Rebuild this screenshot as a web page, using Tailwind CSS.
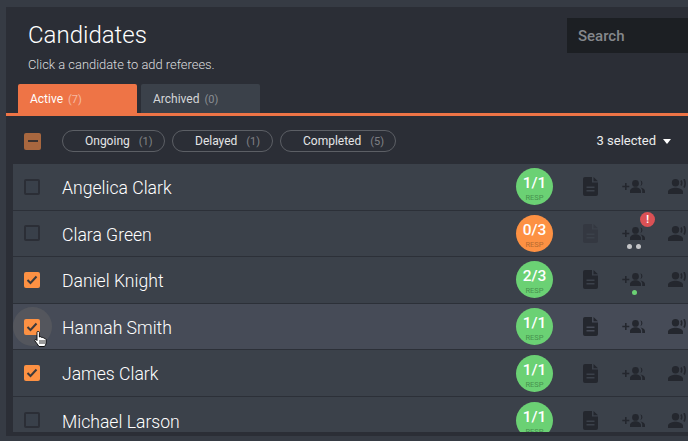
<!DOCTYPE html>
<html lang="en">

<head>
    <meta charset="UTF-8" />
    <title>Candidates</title>
    <script src="https://cdn.jsdelivr.net/npm/@tailwindcss/browser@4"></script>
</head>

<body class="w-[688px] h-[441px] overflow-hidden bg-[#363b44] font-['Roboto',sans-serif]">
    <svg class="hidden">
        <symbol id="doc" viewBox="0 0 15 19"><path fill-rule="evenodd" d="M2 0h7v5.500h6V17a2 2 0 0 1-2 2H2a2 2 0 0 1-2-2V2a2 2 0 0 1 2-2Zm8.500 0L15 4.200h-4.500ZM3.500 9.500V11h8V9.500Zm0 3.500v1.500h8V13Z" fill="currentColor"/></symbol>
        <symbol id="add" viewBox="0 0 23 13"><path d="M3 3h1.600v2.700h2.700v1.600H4.600V10H3V7.300H.3V5.700H3Z M13.500 0a3.400 3.400 0 1 1 0 6.800a3.400 3.400 0 0 1 0-6.800Z M18.300.3a3.100 3.100 0 0 1 0 5.900a5.400 5.400 0 0 0 0-5.900Z M8 13v-2c0-2.500 3.500-3.800 5.500-3.800s5.500 1.300 5.500 3.800v2Z M18.500 7.500c2.300.5 4.500 1.500 4.500 3.500v2h-2.800v-2.200c0-1.300-.6-2.400-1.700-3.300Z" fill="currentColor"/></symbol>
        <symbol id="voice" viewBox="0 0 22 15"><path d="M7.500 0a3.700 3.700 0 1 1 0 7.400a3.700 3.700 0 0 1 0-7.400Z M0 15v-2.500c0-2.500 5-3.800 7.500-3.800s7.500 1.300 7.500 3.800V15Z" fill="currentColor"/><path d="M13 1.500a5 5 0 0 1 0 5M16 0a9 9 0 0 1 0 8.500" fill="none" stroke="currentColor" stroke-width="1.600"/></symbol>
    </svg>

    <div class="ml-[6px] mt-[7px] h-[429px] bg-[#2b2e36] overflow-hidden">
        <div class="flex justify-between h-[100px]">
            <div class="pl-[22px] pt-[13px]">
                <h1 class="text-[24px] leading-[30px] font-light text-white">Candidates</h1>
                <p class="mt-[7px] text-[12.900px] leading-[16px] font-light text-[#dcdddf]">Click a candidate to add referees.</p>
            </div>
            <div class="mt-[11px] w-[121px] h-[35px] bg-[#1c1f23] pl-[11px] pt-[1px] text-[15px] leading-[35px] font-medium text-[#85888c]">Search</div>
        </div>
        <div class="flex gap-[4px] pl-[12px] h-[29px] mt-[-23px]">
            <div class="w-[119px] h-[29px] bg-[#ee7446] rounded-t-[2px] pl-[12px] pt-[1px] text-[12px] leading-[29px] text-white">Active <span class="ml-[2px] text-[11px] text-white/50">(7)</span></div>
            <div class="w-[119px] h-[29px] bg-[#3b414a] rounded-t-[2px] pl-[12px] pt-[1px] text-[12px] leading-[29px] text-[#d5d6d8]">Archived <span class="ml-[2px] text-[11px] text-white/40">(0)</span></div>
        </div>
        <div class="h-[3px] bg-[#ee7446]"></div>

        <div class="flex items-center h-[48px] pt-[2px] pl-[18px]">
            <div class="flex items-center justify-center size-[17px] rounded-[2px] bg-[#a8673f]"><div class="w-[10px] h-[2px] bg-[#3a3230]"></div></div>
            <div class="flex gap-[7px] ml-[21px]">
                <div class="w-[103px] h-[22px] pl-[22px] rounded-full border border-[#5c5f65] text-[12px] leading-[20px] text-[#e4e5e6]">Ongoing <span class="ml-[6px] text-[11px] text-white/40">(1)</span></div>
                <div class="w-[101px] h-[22px] pl-[22px] rounded-full border border-[#5c5f65] text-[12px] leading-[20px] text-[#e4e5e6]">Delayed <span class="ml-[6px] text-[11px] text-white/40">(1)</span></div>
                <div class="w-[116px] h-[22px] pl-[22px] rounded-full border border-[#5c5f65] text-[12px] leading-[20px] text-[#e4e5e6]">Completed <span class="ml-[6px] text-[11px] text-white/40">(5)</span></div>
            </div>
            <div class="ml-auto mr-[17px] flex items-center gap-[7px] text-[13px] text-[#eceded]">3 selected <span class="w-0 h-0 border-x-[4.500px] border-x-transparent border-t-[5px] border-t-white"></span></div>
        </div>

        <div class="ml-[7px] h-[268px] overflow-hidden">
            <!-- Angelica Clark -->
            <div class="flex items-center h-[46.600px] bg-[#3b414a] border-b border-[#2c3038]">
                <div class="shrink-0 ml-[11px] size-[16px] rounded-[2px] bg-[#39404a] border-2 border-[#2b2e36]"></div>
                <div class="shrink-0 ml-[22px] mt-[3px] w-[454px] text-[17.600px] font-light text-white">Angelica Clark</div>
                <div class="shrink-0 flex flex-col items-center justify-center size-[37px] pt-[5px] rounded-full bg-[#6bd174] text-white"><span class="text-[15.500px] leading-[14px] font-medium">1/1</span><span class="mt-[3px] text-[7.500px] leading-[9px] text-[#47914f]">RESP</span></div>
                <svg class="shrink-0 ml-[30px] w-[15px] h-[19px] text-[#24272e]"><use href="#doc"/></svg>
                <svg class="shrink-0 ml-[24px] w-[23px] h-[13px] text-[#24272e]"><use href="#add"/></svg>
                <svg class="shrink-0 ml-[23px] w-[22px] h-[15px] text-[#24272e]"><use href="#voice"/></svg>
            </div>
            <!-- Clara Green -->
            <div class="flex items-center h-[46.600px] bg-[#3b414a] border-b border-[#2c3038]">
                <div class="shrink-0 ml-[11px] size-[16px] rounded-[2px] bg-[#39404a] border-2 border-[#2b2e36]"></div>
                <div class="shrink-0 ml-[22px] mt-[3px] w-[454px] text-[17.600px] font-light text-white">Clara Green</div>
                <div class="shrink-0 flex flex-col items-center justify-center size-[37px] pt-[5px] rounded-full bg-[#fd9143] text-white"><span class="text-[15.500px] leading-[14px] font-medium">0/3</span><span class="mt-[3px] text-[7.500px] leading-[9px] text-[#b56a30]">RESP</span></div>
                <svg class="shrink-0 ml-[30px] w-[15px] h-[19px] text-[#343841]"><use href="#doc"/></svg>
                <div class="shrink-0 relative ml-[24px] w-[23px] h-[13px]">
                    <svg class="w-[23px] h-[13px] text-[#24272e]"><use href="#add"/></svg>
                    <div class="absolute left-[18px] top-[-15px] flex items-center justify-center size-[15px] rounded-full bg-[#da5155] text-[10px] font-bold text-white">!</div>
                    <div class="absolute left-[5px] top-[17px] flex gap-[4px]"><span class="size-[5px] rounded-full bg-[#c4c5c8]"></span><span class="size-[5px] rounded-full bg-[#c4c5c8]"></span></div>
                </div>
                <svg class="shrink-0 ml-[23px] w-[22px] h-[15px] text-[#24272e]"><use href="#voice"/></svg>
            </div>
            <!-- Daniel Knight -->
            <div class="flex items-center h-[46.600px] bg-[#3b414a] border-b border-[#2c3038]">
                <div class="shrink-0 ml-[11px] flex items-center justify-center size-[16px] rounded-[2px] bg-[#fd9143]"><svg class="w-[12px] h-[10px]" viewBox="0 0 12 10"><path d="M1.500 5l3 3l6-6.500" fill="none" stroke="#3b3a3c" stroke-width="2"/></svg></div>
                <div class="shrink-0 ml-[22px] mt-[3px] w-[454px] text-[17.600px] font-light text-white">Daniel Knight</div>
                <div class="shrink-0 flex flex-col items-center justify-center size-[37px] pt-[5px] rounded-full bg-[#6bd174] text-white"><span class="text-[15.500px] leading-[14px] font-medium">2/3</span><span class="mt-[3px] text-[7.500px] leading-[9px] text-[#47914f]">RESP</span></div>
                <svg class="shrink-0 ml-[30px] w-[15px] h-[19px] text-[#24272e]"><use href="#doc"/></svg>
                <div class="shrink-0 relative ml-[24px] w-[23px] h-[13px]">
                    <svg class="w-[23px] h-[13px] text-[#24272e]"><use href="#add"/></svg>
                    <div class="absolute left-[10px] top-[17px] size-[5px] rounded-full bg-[#6bd174]"></div>
                </div>
                <svg class="shrink-0 ml-[23px] w-[22px] h-[15px] text-[#24272e]"><use href="#voice"/></svg>
            </div>
            <!-- Hannah Smith, hovered -->
            <div class="relative flex items-center h-[46.600px] bg-[#464b57] border-b border-[#2c3038]">
                <div class="absolute left-0 top-[3.500px] size-[39px] rounded-full bg-[#5a5b5f]/70"></div>
                <div class="shrink-0 relative ml-[11px] flex items-center justify-center size-[16px] rounded-[2px] bg-[#fd9143]"><svg class="w-[12px] h-[10px]" viewBox="0 0 12 10"><path d="M1.500 5l3 3l6-6.500" fill="none" stroke="#3b3a3c" stroke-width="2"/></svg></div>
                <div class="shrink-0 relative ml-[22px] mt-[3px] w-[454px] text-[17.600px] font-light text-white">Hannah Smith</div>
                <div class="shrink-0 flex flex-col items-center justify-center size-[37px] pt-[5px] rounded-full bg-[#6bd174] text-white"><span class="text-[15.500px] leading-[14px] font-medium">1/1</span><span class="mt-[3px] text-[7.500px] leading-[9px] text-[#47914f]">RESP</span></div>
                <svg class="shrink-0 ml-[30px] w-[15px] h-[19px] text-[#24272e]"><use href="#doc"/></svg>
                <svg class="shrink-0 ml-[24px] w-[23px] h-[13px] text-[#24272e]"><use href="#add"/></svg>
                <svg class="shrink-0 ml-[23px] w-[22px] h-[15px] text-[#24272e]"><use href="#voice"/></svg>
                <!-- hand cursor -->
                <svg class="absolute left-[21px] top-[27px] w-[14px] h-[17px]" viewBox="0 0 14 17"><path d="M3 1.500a1.200 1.200 0 0 1 2.400 0V6l1-.3c.6 0 1 .3 1.100.7c.6-.3 1.300 0 1.500.5c.7-.3 1.500.1 1.600.7c.8-.2 1.400.3 1.400 1V12c0 1.500-.8 2.500-1.500 3.500H5C4 14 2.500 12 1 10c-.6-.9.300-2 1.300-1.300L3 9.500Z" fill="#fff" stroke="#000" stroke-width=".9"/><path d="M6 9v4M8 9v4M10 9v4" stroke="#000" stroke-width=".8"/></svg>
            </div>
            <!-- James Clark -->
            <div class="flex items-center h-[46.600px] bg-[#3b414a] border-b border-[#2c3038]">
                <div class="shrink-0 ml-[11px] flex items-center justify-center size-[16px] rounded-[2px] bg-[#fd9143]"><svg class="w-[12px] h-[10px]" viewBox="0 0 12 10"><path d="M1.500 5l3 3l6-6.500" fill="none" stroke="#3b3a3c" stroke-width="2"/></svg></div>
                <div class="shrink-0 ml-[22px] mt-[3px] w-[454px] text-[17.600px] font-light text-white">James Clark</div>
                <div class="shrink-0 flex flex-col items-center justify-center size-[37px] pt-[5px] rounded-full bg-[#6bd174] text-white"><span class="text-[15.500px] leading-[14px] font-medium">1/1</span><span class="mt-[3px] text-[7.500px] leading-[9px] text-[#47914f]">RESP</span></div>
                <svg class="shrink-0 ml-[30px] w-[15px] h-[19px] text-[#24272e]"><use href="#doc"/></svg>
                <svg class="shrink-0 ml-[24px] w-[23px] h-[13px] text-[#24272e]"><use href="#add"/></svg>
                <svg class="shrink-0 ml-[23px] w-[22px] h-[15px] text-[#24272e]"><use href="#voice"/></svg>
            </div>
            <!-- Michael Larson -->
            <div class="flex items-center h-[46.600px] bg-[#3b414a]">
                <div class="shrink-0 ml-[11px] size-[16px] rounded-[2px] bg-[#39404a] border-2 border-[#2b2e36]"></div>
                <div class="shrink-0 ml-[22px] mt-[3px] w-[454px] text-[17.600px] font-light text-white">Michael Larson</div>
                <div class="shrink-0 flex flex-col items-center justify-center size-[37px] pt-[5px] rounded-full bg-[#6bd174] text-white"><span class="text-[15.500px] leading-[14px] font-medium">1/1</span><span class="mt-[3px] text-[7.500px] leading-[9px] text-[#47914f]">RESP</span></div>
                <svg class="shrink-0 ml-[30px] w-[15px] h-[19px] text-[#24272e]"><use href="#doc"/></svg>
                <svg class="shrink-0 ml-[24px] w-[23px] h-[13px] text-[#24272e]"><use href="#add"/></svg>
                <svg class="shrink-0 ml-[23px] w-[22px] h-[15px] text-[#24272e]"><use href="#voice"/></svg>
            </div>
        </div>
    </div>
</body>

</html>
